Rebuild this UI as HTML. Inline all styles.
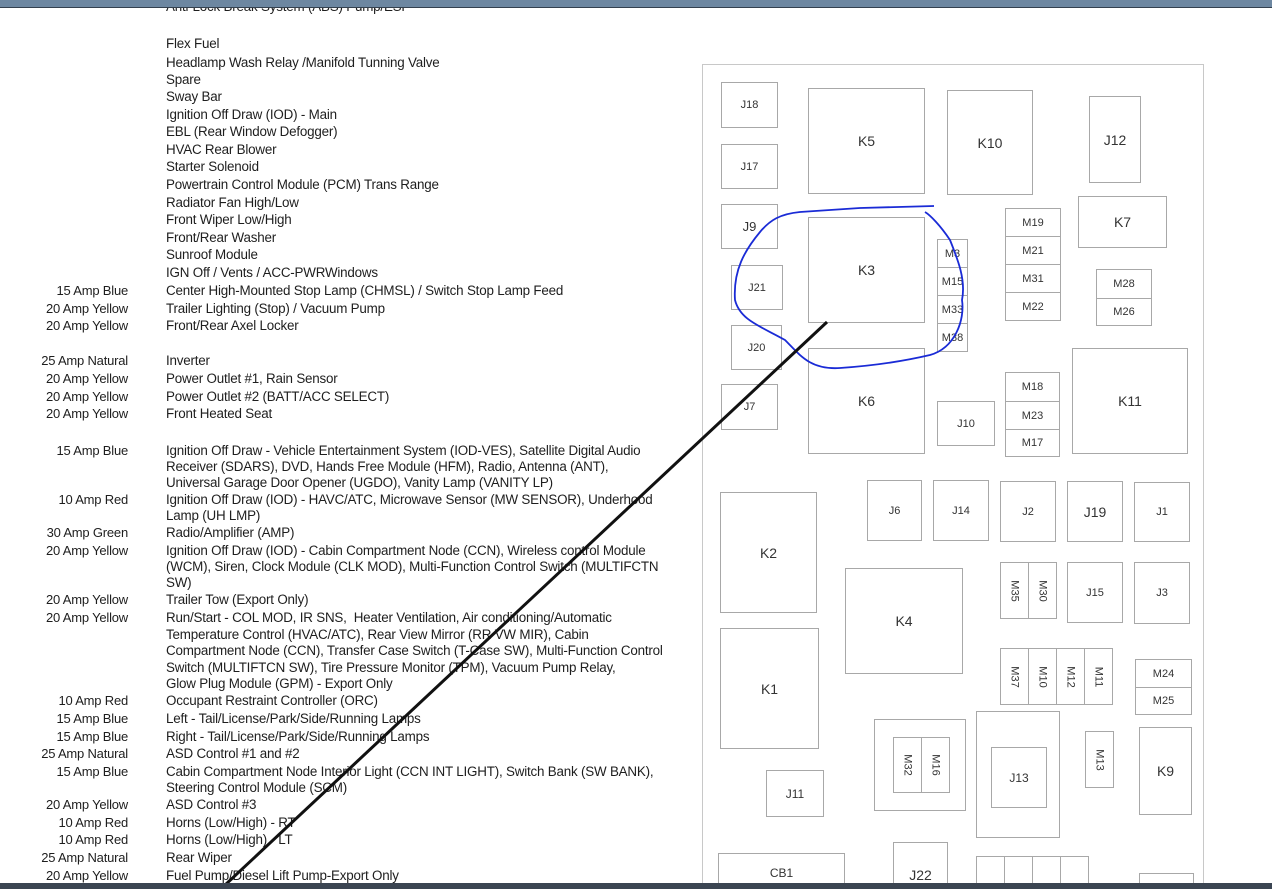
<!DOCTYPE html>
<html style="overflow:hidden;height:889px"><head><meta charset="utf-8"><style>
html,body{overflow:hidden}
body{margin:0;width:1272px;height:889px;background:#fff;position:relative;overflow:hidden;font-family:"Liberation Sans",Arial,sans-serif;color:#1e1e1e}
.t{position:absolute;font-size:13.4px;line-height:16px;white-space:nowrap;letter-spacing:-0.2px}
.l{position:absolute;font-size:13px;line-height:16px;white-space:nowrap;right:1144px;letter-spacing:-0.2px}
.b{position:absolute;border:1px solid #a8a8a8;box-sizing:border-box;display:flex;align-items:center;justify-content:center;font-size:12px;color:#333;background:#fff}
.v span{transform:rotate(90deg);display:inline-block}
</style></head><body>
<div style="position:absolute;left:702px;top:64px;width:502px;height:830px;border:1px solid #c8c8c8;box-sizing:border-box"></div>

<div class="t" style="left:166px;top:-1px">Anti-Lock Break System (ABS) Pump/ESP</div>
<div class="t" style="left:166px;top:36px">Flex Fuel</div>
<div class="t" style="left:166px;top:55px">Headlamp Wash Relay /Manifold Tunning Valve</div>
<div class="t" style="left:166px;top:72px">Spare</div>
<div class="t" style="left:166px;top:89px">Sway Bar</div>
<div class="t" style="left:166px;top:107px">Ignition Off Draw (IOD) - Main</div>
<div class="t" style="left:166px;top:124px">EBL (Rear Window Defogger)</div>
<div class="t" style="left:166px;top:142px">HVAC Rear Blower</div>
<div class="t" style="left:166px;top:159px">Starter Solenoid</div>
<div class="t" style="left:166px;top:177px">Powertrain Control Module (PCM) Trans Range</div>
<div class="t" style="left:166px;top:195px">Radiator Fan High/Low</div>
<div class="t" style="left:166px;top:212px">Front Wiper Low/High</div>
<div class="t" style="left:166px;top:230px">Front/Rear Washer</div>
<div class="t" style="left:166px;top:247px">Sunroof Module</div>
<div class="t" style="left:166px;top:265px">IGN Off / Vents / ACC-PWRWindows</div>
<div class="l" style="top:283px">15 Amp Blue</div><div class="t" style="left:166px;top:283px">Center High-Mounted Stop Lamp (CHMSL) / Switch Stop Lamp Feed</div>
<div class="l" style="top:301px">20 Amp Yellow</div><div class="t" style="left:166px;top:301px">Trailer Lighting (Stop) / Vacuum Pump</div>
<div class="l" style="top:318px">20 Amp Yellow</div><div class="t" style="left:166px;top:318px">Front/Rear Axel Locker</div>
<div class="l" style="top:353px">25 Amp Natural</div><div class="t" style="left:166px;top:353px">Inverter</div>
<div class="l" style="top:371px">20 Amp Yellow</div><div class="t" style="left:166px;top:371px">Power Outlet #1, Rain Sensor</div>
<div class="l" style="top:389px">20 Amp Yellow</div><div class="t" style="left:166px;top:389px">Power Outlet #2 (BATT/ACC SELECT)</div>
<div class="l" style="top:406px">20 Amp Yellow</div><div class="t" style="left:166px;top:406px">Front Heated Seat</div>
<div class="l" style="top:443px">15 Amp Blue</div><div class="t" style="left:166px;top:443px">Ignition Off Draw - Vehicle Entertainment System (IOD-VES), Satellite Digital Audio<br>Receiver (SDARS), DVD, Hands Free Module (HFM), Radio, Antenna (ANT),<br>Universal Garage Door Opener (UGDO), Vanity Lamp (VANITY LP)</div>
<div class="l" style="top:492px">10 Amp Red</div><div class="t" style="left:166px;top:492px">Ignition Off Draw (IOD) - HAVC/ATC, Microwave Sensor (MW SENSOR), Underhood<br>Lamp (UH LMP)</div>
<div class="l" style="top:525px">30 Amp Green</div><div class="t" style="left:166px;top:525px">Radio/Amplifier (AMP)</div>
<div class="l" style="top:543px">20 Amp Yellow</div><div class="t" style="left:166px;top:543px">Ignition Off Draw (IOD) - Cabin Compartment Node (CCN), Wireless control Module<br>(WCM), Siren, Clock Module (CLK MOD), Multi-Function Control Switch (MULTIFCTN<br>SW)</div>
<div class="l" style="top:592px">20 Amp Yellow</div><div class="t" style="left:166px;top:592px">Trailer Tow (Export Only)</div>
<div class="l" style="top:610px">20 Amp Yellow</div><div class="t" style="left:166px;top:610px;line-height:16.6px">Run/Start - COL MOD, IR SNS,&nbsp; Heater Ventilation, Air conditioning/Automatic<br>Temperature Control (HVAC/ATC), Rear View Mirror (RR VW MIR), Cabin<br>Compartment Node (CCN), Transfer Case Switch (T-Case SW), Multi-Function Control<br>Switch (MULTIFTCN SW), Tire Pressure Monitor (TPM), Vacuum Pump Relay,<br>Glow Plug Module (GPM) - Export Only</div>
<div class="l" style="top:693px">10 Amp Red</div><div class="t" style="left:166px;top:693px">Occupant Restraint Controller (ORC)</div>
<div class="l" style="top:711px">15 Amp Blue</div><div class="t" style="left:166px;top:711px">Left - Tail/License/Park/Side/Running Lamps</div>
<div class="l" style="top:729px">15 Amp Blue</div><div class="t" style="left:166px;top:729px">Right - Tail/License/Park/Side/Running Lamps</div>
<div class="l" style="top:746px">25 Amp Natural</div><div class="t" style="left:166px;top:746px">ASD Control #1 and #2</div>
<div class="l" style="top:764px">15 Amp Blue</div><div class="t" style="left:166px;top:764px">Cabin Compartment Node Interior Light (CCN INT LIGHT), Switch Bank (SW BANK),<br>Steering Control Module (SCM)</div>
<div class="l" style="top:797px">20 Amp Yellow</div><div class="t" style="left:166px;top:797px">ASD Control #3</div>
<div class="l" style="top:815px">10 Amp Red</div><div class="t" style="left:166px;top:815px">Horns (Low/High) - RT</div>
<div class="l" style="top:832px">10 Amp Red</div><div class="t" style="left:166px;top:832px">Horns (Low/High) - LT</div>
<div class="l" style="top:850px">25 Amp Natural</div><div class="t" style="left:166px;top:850px">Rear Wiper</div>
<div class="l" style="top:868px">20 Amp Yellow</div><div class="t" style="left:166px;top:868px">Fuel Pump/Diesel Lift Pump-Export Only</div>

<div class="b" style="left:721px;top:82px;width:57px;height:46px;font-size:11px">J18</div>
<div class="b" style="left:808px;top:88px;width:117px;height:106px;font-size:14px">K5</div>
<div class="b" style="left:947px;top:90px;width:86px;height:105px;font-size:14px">K10</div>
<div class="b" style="left:1089px;top:96px;width:52px;height:87px;font-size:14px">J12</div>
<div class="b" style="left:721px;top:144px;width:57px;height:45px;font-size:11px">J17</div>
<div class="b" style="left:721px;top:204px;width:57px;height:45px;font-size:13px">J9</div>
<div class="b" style="left:808px;top:217px;width:117px;height:106px;font-size:14px">K3</div>
<div class="b" style="left:937px;top:239px;width:31px;height:29px;font-size:11px">M3</div>
<div class="b" style="left:937px;top:267px;width:31px;height:29px;font-size:11px">M15</div>
<div class="b" style="left:937px;top:295px;width:31px;height:29px;font-size:11px">M33</div>
<div class="b" style="left:937px;top:323px;width:31px;height:29px;font-size:11px">M38</div>
<div class="b" style="left:1005px;top:208px;width:56px;height:29px;font-size:11px">M19</div>
<div class="b" style="left:1005px;top:236px;width:56px;height:29px;font-size:11px">M21</div>
<div class="b" style="left:1005px;top:264px;width:56px;height:29px;font-size:11px">M31</div>
<div class="b" style="left:1005px;top:292px;width:56px;height:29px;font-size:11px">M22</div>
<div class="b" style="left:1078px;top:196px;width:89px;height:52px;font-size:14px">K7</div>
<div class="b" style="left:1096px;top:269px;width:56px;height:30px;font-size:11px">M28</div>
<div class="b" style="left:1096px;top:298px;width:56px;height:28px;font-size:11px">M26</div>
<div class="b" style="left:731px;top:265px;width:52px;height:45px;font-size:11px">J21</div>
<div class="b" style="left:731px;top:325px;width:51px;height:45px;font-size:11px">J20</div>
<div class="b" style="left:721px;top:384px;width:57px;height:46px;font-size:11px">J7</div>
<div class="b" style="left:808px;top:348px;width:117px;height:106px;font-size:14px">K6</div>
<div class="b" style="left:937px;top:401px;width:58px;height:45px;font-size:11px">J10</div>
<div class="b" style="left:1005px;top:372px;width:55px;height:30px;font-size:11px">M18</div>
<div class="b" style="left:1005px;top:401px;width:55px;height:29px;font-size:11px">M23</div>
<div class="b" style="left:1005px;top:429px;width:55px;height:28px;font-size:11px">M17</div>
<div class="b" style="left:1072px;top:348px;width:116px;height:106px;font-size:14px">K11</div>

<div class="b" style="left:867px;top:480px;width:55px;height:61px;font-size:11px">J6</div>
<div class="b" style="left:933px;top:480px;width:56px;height:61px;font-size:11px">J14</div>
<div class="b" style="left:1000px;top:481px;width:56px;height:61px;font-size:11px">J2</div>
<div class="b" style="left:1067px;top:481px;width:56px;height:61px;font-size:14px">J19</div>
<div class="b" style="left:1134px;top:482px;width:56px;height:60px;font-size:11px">J1</div>
<div class="b" style="left:720px;top:492px;width:97px;height:121px;font-size:14px">K2</div>
<div class="b" style="left:845px;top:568px;width:118px;height:106px;font-size:14px">K4</div>
<div class="b v" style="left:1000px;top:562px;width:29px;height:57px;font-size:11px"><span>M35</span></div>
<div class="b v" style="left:1028px;top:562px;width:29px;height:57px;font-size:11px"><span>M30</span></div>
<div class="b" style="left:1067px;top:562px;width:56px;height:61px;font-size:11px">J15</div>
<div class="b" style="left:1134px;top:562px;width:56px;height:62px;font-size:11px">J3</div>
<div class="b" style="left:720px;top:628px;width:99px;height:121px;font-size:14px">K1</div>
<div class="b v" style="left:1000px;top:648px;width:29px;height:57px;font-size:11px"><span>M37</span></div>
<div class="b v" style="left:1028px;top:648px;width:29px;height:57px;font-size:11px"><span>M10</span></div>
<div class="b v" style="left:1056px;top:648px;width:29px;height:57px;font-size:11px"><span>M12</span></div>
<div class="b v" style="left:1084px;top:648px;width:29px;height:57px;font-size:11px"><span>M11</span></div>
<div class="b" style="left:1135px;top:659px;width:57px;height:29px;font-size:11px">M24</div>
<div class="b" style="left:1135px;top:687px;width:57px;height:28px;font-size:11px">M25</div>
<div class="b" style="left:874px;top:719px;width:92px;height:92px"></div>
<div class="b v" style="left:893px;top:737px;width:29px;height:56px;font-size:11px"><span>M32</span></div>
<div class="b v" style="left:921px;top:737px;width:29px;height:56px;font-size:11px"><span>M16</span></div>
<div class="b" style="left:976px;top:711px;width:84px;height:127px"></div>
<div class="b" style="left:991px;top:747px;width:56px;height:61px;font-size:12px">J13</div>
<div class="b v" style="left:1085px;top:731px;width:29px;height:57px;font-size:11px"><span>M13</span></div>
<div class="b" style="left:1139px;top:727px;width:53px;height:88px;font-size:14px">K9</div>
<div class="b" style="left:766px;top:770px;width:58px;height:47px;font-size:12px">J11</div>
<div class="b" style="left:718px;top:853px;width:127px;height:36px;font-size:12px;align-items:flex-start;padding-top:12px">CB1</div>
<div class="b" style="left:893px;top:842px;width:55px;height:47px;font-size:14px;align-items:flex-start;padding-top:24px">J22</div>
<div class="b" style="left:976px;top:856px;width:29px;height:33px"></div>
<div class="b" style="left:1004px;top:856px;width:29px;height:33px"></div>
<div class="b" style="left:1032px;top:856px;width:29px;height:33px"></div>
<div class="b" style="left:1060px;top:856px;width:29px;height:33px"></div>
<div class="b" style="left:1139px;top:873px;width:55px;height:16px"></div>

<svg style="position:absolute;left:0;top:0" width="1272" height="889">
<path d="M934,206 L860,208 L800,212 C780,214 770,220 760,232 C745,250 733,270 735,300 C740,320 760,326 785,340 C800,355 810,370 840,368 C870,366 900,362 930,355 C955,348 965,320 962,300 C966,280 958,260 950,240 C940,225 930,215 925,212" fill="none" stroke="#1a2bd6" stroke-width="1.8"/>
<line x1="827" y1="322" x2="224" y2="886" stroke="#111" stroke-width="3"/>
</svg>
<div style="position:absolute;left:0;top:0;width:1272px;height:7px;background:#6d87a1;border-bottom:1px solid #33404e"></div>
<div style="position:absolute;left:0;top:883px;width:1272px;height:6px;background:#3b4552"></div>
</body></html>
